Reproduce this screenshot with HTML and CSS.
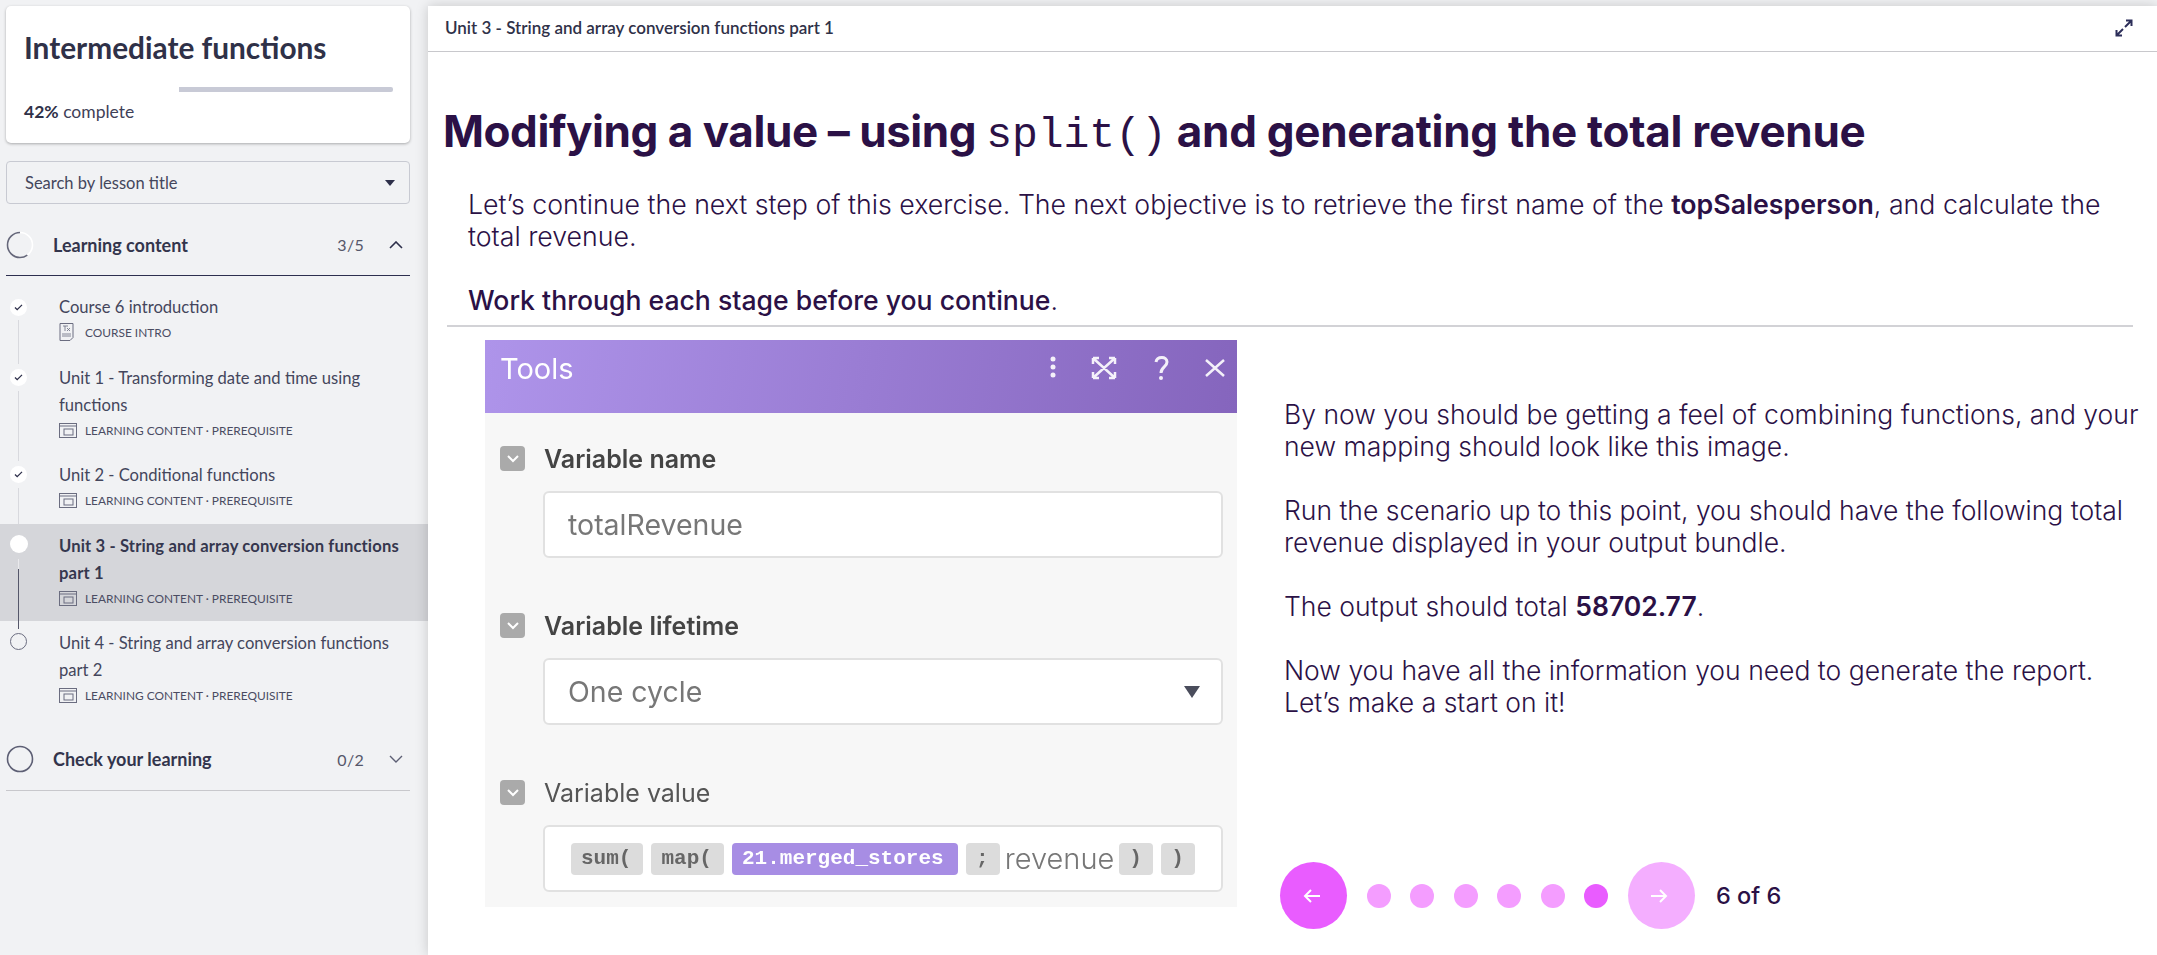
FILE: index.html
```html
<!DOCTYPE html>
<html lang="en">
<head>
<meta charset="utf-8">
<title>Unit 3 - String and array conversion functions part 1</title>
<link rel="stylesheet" href="styles.css">
</head>
<body>
<div class="app">
  <aside class="sidebar">
    <section class="course-card">
      <h2 class="course-title">Intermediate functions</h2>
      <div class="track"><div class="track-fill"></div></div>
      <p class="course-progress"><b>42%</b> complete</p>
    </section>
    <div class="search"><span>Search by lesson title</span><svg class="caret" viewBox="0 0 10 6" width="10" height="6"><path d="M0 0h10L5 6z"/></svg></div>

    <div class="section-head section-open">
      <svg class="ring" viewBox="0 0 28 28" width="28" height="28"><circle cx="14" cy="14" r="12.5" fill="none" stroke="#fff" stroke-width="1.6"/><circle class="ring-arc" cx="14" cy="14" r="12.5" fill="none" stroke="#65677a" stroke-width="1.6" pathLength="100" stroke-dasharray="60 40"/></svg>
      <span class="section-name">Learning content</span>
      <span class="section-count">3/5</span>
      <svg class="chev" viewBox="0 0 14 8" width="14" height="8"><path d="M1 7l6-6 6 6" fill="none" stroke="#2d2f4a" stroke-width="1.6"/></svg>
    </div>

    <ul class="lessons">
      <li class="lesson lesson-short done">
        <span class="dot"><svg viewBox="0 0 10 8" width="9" height="7"><path d="M1 4l2.5 2.5L9 1" fill="none" stroke="#2d2f4a" stroke-width="1.5"/></svg></span>
        <div class="lesson-body"><div class="lesson-title">Course 6 introduction</div>
          <div class="meta"><span class="meta-slot"><svg viewBox="0 0 15 18" width="15" height="18"><path d="M1 .5h13v14l-3 3H1z" fill="none" stroke="#6b6d80"/><path d="M4 3h5M6 3v5M8 5l3 3M11 5L8 8M3 11h9M3 13h9" stroke="#6b6d80" stroke-width=".8" fill="none"/></svg></span><span>COURSE INTRO</span></div></div>
      </li>
      <li class="lesson done">
        <span class="dot"><svg viewBox="0 0 10 8" width="9" height="7"><path d="M1 4l2.5 2.5L9 1" fill="none" stroke="#2d2f4a" stroke-width="1.5"/></svg></span>
        <div class="lesson-body"><div class="lesson-title">Unit 1 - Transforming date and time using functions</div>
          <div class="meta"><span class="meta-slot"><svg viewBox="0 0 18 15" width="18" height="15"><rect x=".5" y=".5" width="17" height="14" fill="none" stroke="#6b6d80"/><path d="M.5 3h17" stroke="#6b6d80"/><rect x="5" y="6" width="9" height="6" fill="none" stroke="#6b6d80"/></svg></span><span>LEARNING CONTENT · PREREQUISITE</span></div></div>
      </li>
      <li class="lesson lesson-short done">
        <span class="dot"><svg viewBox="0 0 10 8" width="9" height="7"><path d="M1 4l2.5 2.5L9 1" fill="none" stroke="#2d2f4a" stroke-width="1.5"/></svg></span>
        <div class="lesson-body"><div class="lesson-title">Unit 2 - Conditional functions</div>
          <div class="meta"><span class="meta-slot"><svg viewBox="0 0 18 15" width="18" height="15"><rect x=".5" y=".5" width="17" height="14" fill="none" stroke="#6b6d80"/><path d="M.5 3h17" stroke="#6b6d80"/><rect x="5" y="6" width="9" height="6" fill="none" stroke="#6b6d80"/></svg></span><span>LEARNING CONTENT · PREREQUISITE</span></div></div>
      </li>
      <li class="lesson current">
        <span class="dot"></span>
        <div class="lesson-body"><div class="lesson-title">Unit 3 - String and array conversion functions part 1</div>
          <div class="meta"><span class="meta-slot"><svg viewBox="0 0 18 15" width="18" height="15"><rect x=".5" y=".5" width="17" height="14" fill="none" stroke="#6b6d80"/><path d="M.5 3h17" stroke="#6b6d80"/><rect x="5" y="6" width="9" height="6" fill="none" stroke="#6b6d80"/></svg></span><span>LEARNING CONTENT · PREREQUISITE</span></div></div>
      </li>
      <li class="lesson todo">
        <span class="dot"></span>
        <div class="lesson-body"><div class="lesson-title">Unit 4 - String and array conversion functions part 2</div>
          <div class="meta"><span class="meta-slot"><svg viewBox="0 0 18 15" width="18" height="15"><rect x=".5" y=".5" width="17" height="14" fill="none" stroke="#6b6d80"/><path d="M.5 3h17" stroke="#6b6d80"/><rect x="5" y="6" width="9" height="6" fill="none" stroke="#6b6d80"/></svg></span><span>LEARNING CONTENT · PREREQUISITE</span></div></div>
      </li>
    </ul>

    <div class="section-head section-closed">
      <svg class="ring" viewBox="0 0 28 28" width="28" height="28"><circle cx="14" cy="14" r="12.5" fill="none" stroke="#5d5f74" stroke-width="1.6"/></svg>
      <span class="section-name">Check your learning</span>
      <span class="section-count">0/2</span>
      <svg class="chev" viewBox="0 0 14 8" width="14" height="8"><path d="M1 1l6 6 6-6" fill="none" stroke="#5d5f74" stroke-width="1.4"/></svg>
    </div>
  </aside>

  <main class="main">
    <header class="main-head">
      <span class="main-head-title">Unit 3 - String and array conversion functions part 1</span>
      <svg class="expand" viewBox="0 0 18 18" width="18" height="18"><path d="M11 1.5h5.5V7M16 2L10 8M7 16.500H1.500V11M2 16l6-6" fill="none" stroke="#2d2f5a" stroke-width="2"/></svg>
    </header>
    <article class="lesson-page">
      <h1 class="page-title">Modifying a value – using <code>split()</code> <span class="title-end">and generating the total revenue</span></h1>
      <p class="intro">Let’s continue the next step of this exercise. The next objective is to retrieve the first name of the <b>topSalesperson</b>, and calculate the total revenue.</p>
      <p class="stage-note"><b>Work through each stage before you continue</b>.</p>
      <div class="stage">
        <figure class="tools">
          <div class="tools-bar">
            <span class="tools-name">Tools</span>
            <svg class="tools-icons" viewBox="0 0 180 26" width="180" height="26"><g fill="#fff" opacity=".9"><circle cx="7" cy="4" r="2.500"/><circle cx="7" cy="12" r="2.500"/><circle cx="7" cy="20" r="2.500"/></g><path d="M48 4l20 18M68 4L48 22M47 3h6M47 3v6M69 3h-6M69 3v6M47 23h6M47 23v-6M69 23h-6M69 23v-6" stroke="#fff" stroke-width="2.500" fill="none" opacity=".9"/><path d="M110 7c1-6 11-6 11 0 0 5-6 5-6 11" stroke="#fff" stroke-width="3" fill="none" opacity=".9"/><circle cx="115" cy="23" r="2" fill="#fff" opacity=".9"/><path d="M160 5l18 16M178 5l-18 16" stroke="#fff" stroke-width="2.500" fill="none" opacity=".9"/></svg>
          </div>
          <div class="tools-body">
            <div class="field">
              <div class="field-label"><span class="toggle"><svg viewBox="0 0 12 8" width="12" height="8"><path d="M1 1l5 5 5-5" fill="none" stroke="#fff" stroke-width="2"/></svg></span><b>Variable name</b></div>
              <div class="field-input">totalRevenue</div>
            </div>
            <div class="field">
              <div class="field-label"><span class="toggle"><svg viewBox="0 0 12 8" width="12" height="8"><path d="M1 1l5 5 5-5" fill="none" stroke="#fff" stroke-width="2"/></svg></span><b>Variable lifetime</b></div>
              <div class="field-input field-select">One cycle<svg viewBox="0 0 16 12" width="16" height="12"><path d="M0 0h16L8 12z" fill="#4a4d5c"/></svg></div>
            </div>
            <div class="field">
              <div class="field-label"><span class="toggle"><svg viewBox="0 0 12 8" width="12" height="8"><path d="M1 1l5 5 5-5" fill="none" stroke="#fff" stroke-width="2"/></svg></span><span>Variable value</span></div>
              <div class="field-input field-formula">
                <span class="chip chip-fn">sum(</span><span class="chip chip-fn">map(</span><span class="chip chip-var">21.merged_stores</span><span class="chip chip-sep">;</span><span class="formula-text">revenue</span><span class="chip chip-sep">)</span><span class="chip chip-sep">)</span>
              </div>
            </div>
          </div>
        </figure>
        <div class="stage-side">
          <div class="stage-copy">
            <p>By now you should be getting a feel of combining functions, and your new mapping should look like this image.</p>
            <p>Run the scenario up to this point, you should have the following total revenue displayed in your output bundle.</p>
            <p>The output should total <b>58702.77</b>.</p>
            <p>Now you have all the information you need to generate the report. Let’s make a start on it!</p>
          </div>
          <nav class="pager">
            <span class="pager-btn pager-prev"><svg viewBox="0 0 18 16" width="18" height="16"><path d="M17 8H2M8 2L2 8l6 6" fill="none" stroke="#fff" stroke-width="2"/></svg></span>
            <span class="pager-dot"></span><span class="pager-dot"></span><span class="pager-dot"></span><span class="pager-dot"></span><span class="pager-dot"></span><span class="pager-dot pager-dot-on"></span>
            <span class="pager-btn pager-next"><svg viewBox="0 0 18 16" width="18" height="16"><path d="M1 8h15M10 2l6 6-6 6" fill="none" stroke="#fff" stroke-width="2"/></svg></span>
            <span class="pager-count">6 of 6</span>
          </nav>
        </div>
      </div>
    </article>
  </main>
</div>
</body>
</html>
```
FILE: styles.css
```css
* { box-sizing: border-box; }
html, body { margin: 0; height: 955px; overflow: hidden; background: #f1f2f4; }
p, h1, h2, ul, figure { margin: 0; padding: 0; }
ul { list-style: none; }

.app { display: flex; height: 955px; }

/* Sidebar */
.sidebar { width: 428px; flex: none; padding-top: 6px; font-family: "Lato", "Noto Sans", sans-serif; color: #3a3c52; }
.course-card { width: 404px; height: 137px; margin-left: 6px; padding: 19px 18px 0; background: #fff; border-radius: 5px; box-shadow: 0 1px 3px rgba(0,0,0,.3); }
.course-title { font-size: 29.800px; line-height: 46px; font-weight: 700; color: #2f3148; }
.track { height: 5px; margin-top: 16px; width: 369px; background: #c8cad6; border-radius: 2px; }
.track-fill { width: 42%; height: 100%; background: #fff; }
.course-progress { margin-top: 8px; font-size: 17.500px; line-height: 24px; color: #3f4158; }
.course-progress b { font-weight: 700; color: #2f3148; }
.search { width: 404px; height: 43px; margin: 18px 0 0 6px; padding: 0 14px 0 18px; display: flex; align-items: center; justify-content: space-between; border: 1px solid #c8cad2; border-radius: 4px; font-size: 16.500px; color: #44465c; }
.caret { fill: #2d2f4a; }
.section-head { width: 404px; margin-left: 6px; display: flex; align-items: center; }
.section-open { height: 72px; padding-top: 10px; border-bottom: 1px solid #2d2f4f; }
.section-closed { height: 73px; padding-top: 10px; border-bottom: 1px solid #c8c8cc; }
.ring { flex: none; }
.ring-arc { transform: rotate(-90deg) scaleY(-1); transform-origin: 14px 14px; }
.section-name { margin-left: 19px; font-size: 18px; font-weight: 700; color: #33354c; flex: 1; }
.section-count { font-size: 16px; color: #55576a; letter-spacing: .3px; margin-right: 25px; }
.chev { margin-right: 7px; flex: none; }

.lessons { margin-top: 9px; }
.lesson { position: relative; display: flex; height: 97px; padding: 9px 18px 0 10px; font-size: 16.600px; }
.lesson-short { height: 71px; }
.lesson::after { content: ""; position: absolute; left: 18px; top: 35px; bottom: -8px; width: 1px; background: #d8d9de; }
.lesson.todo::after { display: none; }
.lesson.current { background: #d5d6da; font-weight: 700; }
.lesson.current::after { background: linear-gradient(#e9e9ec 0 10px, #55576a 10px); }
.dot { flex: none; width: 17px; height: 17px; margin-top: 3.500px; margin-right: 32px; border-radius: 50%; background: #fff; display: flex; align-items: center; justify-content: center; position: relative; z-index: 1; }
.lesson:first-child .dot { margin-top: 5px; }
.current .dot { width: 18px; height: 18px; margin-right: 31px; margin-top: 2px; }
.todo .dot { background: transparent; border: 1px solid #6b6d80; margin-top: 2.500px; }
.lesson-title { line-height: 27px; color: #44465c; }
.current .lesson-title { color: #35374e; letter-spacing: .14px; }
.meta { display: flex; align-items: center; height: 24px; font-size: 11.900px; font-weight: 400; color: #4a4c62; margin-top: -1px; }
.meta-slot { width: 26px; flex: none; display: flex; }

/* Main */
.main { flex: 1; min-width: 0; margin-top: 6px; background: #fff; box-shadow: 0 0 12px rgba(0,0,0,.18); position: relative; font-family: "Inter", "Noto Sans", sans-serif; color: #2b1146; }
.main-head { height: 46px; padding: 0 24px 2px 17px; display: flex; align-items: center; justify-content: space-between; border-bottom: 1px solid #c8c8cc; }
.main-head-title { font-family: "Lato", "Noto Sans", sans-serif; font-size: 17px; font-weight: 600; color: #2f3148; }
.lesson-page { padding: 49px 0 0 15px; }
.page-title { font-size: 44px; line-height: 60px; font-weight: 700; letter-spacing: -.44px; color: #2b1146; }
.page-title code { font-family: "Liberation Mono", monospace; font-size: 43px; font-weight: 400; letter-spacing: 0; }
.title-end { letter-spacing: -.27px; }
.intro { margin: 22px 24px 0 25px; font-size: 26.730px; line-height: 32px; font-weight: 300; }
.intro b, .stage-copy b { font-weight: 600; }
.stage-note { margin: 32px 24px 0 25px; font-size: 26.600px; line-height: 32px; font-weight: 300; }
.stage-note b { font-weight: 500; }
.stage { margin: 9px 24px 0 4px; padding-top: 13px; border-top: 2px solid #d2d2d6; display: flex; }

/* Screenshot panel */
.tools { width: 752px; height: 567px; margin-left: 38px; flex: none; background: #f7f7f7; filter: blur(.5px); overflow: hidden; }
.tools-bar { height: 73px; padding: 15px 11px 0 15px; display: flex; justify-content: space-between; align-items: flex-start; background: linear-gradient(100deg, #ae94ea, #8565bd); }
.tools-name { font-size: 29px; line-height: 28px; font-weight: 400; color: #fff; }
.tools-body { padding: 33px 15px 0; }
.field { margin-bottom: 55px; }
.field-label { display: flex; align-items: center; gap: 19px; height: 25px; font-size: 25px; color: #555; }
.field-label b { font-weight: 600; color: #444; }
.toggle { width: 25px; height: 25px; flex: none; border-radius: 4px; background: #aaa; display: flex; align-items: center; justify-content: center; }
.field-input { width: 680px; height: 67px; margin: 20px 0 0 43px; padding: 0 23px; display: flex; align-items: center; background: #fff; border: 2px solid #e1e1e1; border-radius: 6px; font-size: 28.500px; font-weight: 400; color: #777; }
.field-select { justify-content: space-between; padding-right: 21px; }
.field-formula { padding: 0 26px; gap: 8px; }
.chip { height: 32px; padding: 0 10px; display: flex; align-items: center; border-radius: 4px; background: #dcdcdc; font-family: "Liberation Mono", monospace; font-size: 21px; font-weight: 700; color: #666; }
.chip-fn { width: 73px; }
.chip-var { width: 228px; background: #a78de4; color: #fff; }
.chip-sep { width: 34px; }
.formula-text { font-size: 29px; font-weight: 300; margin: 0 -3px; }

/* Right column */
.stage-side { flex: 1; min-width: 0; margin-left: 47px; margin-right: -8px; display: flex; flex-direction: column; }
.stage-copy { margin-top: 58px; font-size: 26.500px; line-height: 32px; font-weight: 300; }
.stage-copy p + p { margin-top: 32px; }
.pager { margin: auto 0 -22px -4px; display: flex; align-items: center; gap: 19.500px; }
.pager-btn { width: 67px; height: 67px; padding-right: 4px; border-radius: 50%; display: flex; align-items: center; justify-content: center; }
.pager-prev { background: #e95cff; }
.pager-next { background: #f4aeff; }
.pager-dot { width: 24px; height: 24px; border-radius: 50%; background: #f49dff; }
.pager-dot-on { background: #e95cff; }
.pager-count { margin-left: 2px; font-size: 23.500px; font-weight: 500; color: #2b1146; }
```
